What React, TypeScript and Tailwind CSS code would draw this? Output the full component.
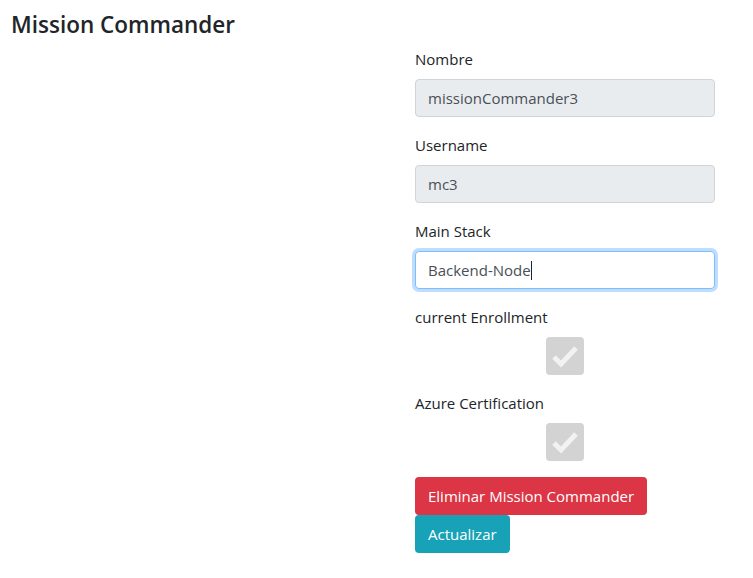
import React from "react";

const Field = ({ label, value, focused }: { label: string; value: string; focused?: boolean }) => (
  <div className="mb-4">
    <label className="block mb-2 leading-6 text-[15px] text-[#212529]">{label}</label>
    {focused ? (
      <div className="h-[38px] flex items-center px-3 rounded border border-[#80bdff] bg-white shadow-[0_0_0_3px_rgba(0,123,255,0.25)] text-[15px] text-[#495057]">
        {value}
        <span className="inline-block w-px h-[19px] bg-[#212529]" />
      </div>
    ) : (
      <input
        readOnly
        value={value}
        className="w-full h-[38px] px-3 rounded border border-[#ced4da] bg-[#e9ecef] text-[15px] text-[#495057] outline-none"
      />
    )}
  </div>
);

const Check = ({ label }: { label: string }) => (
  <div className="mb-4">
    <label className="block mb-2 leading-6 text-[15px] text-[#212529]">{label}</label>
    <div className="flex justify-center">
      <div className="w-[38px] h-[38px] rounded-sm bg-[#d3d3d3] flex items-center justify-center">
        <svg width="28" height="24" viewBox="0 0 28 24">
          <path d="M3 13 L10 20 L25 4" fill="none" stroke="#f2f2f2" strokeWidth="5" strokeLinejoin="miter" />
        </svg>
      </div>
    </div>
  </div>
);

export default function App() {
  return (
    <div className="bg-white min-h-[578px] pt-[10px] pl-[11px] font-['Open_Sans','Noto_Sans',sans-serif]">
      <h4 className="text-[22.5px] font-semibold leading-[29px] text-[#212529] mb-2">Mission Commander</h4>
      <div className="ml-[404px] w-[300px]">
        <Field label="Nombre" value="missionCommander3" />
        <Field label="Username" value="mc3" />
        <Field label="Main Stack" value="Backend-Node" focused />
        <Check label="current Enrollment" />
        <Check label="Azure Certification" />
        <div className="flex flex-col items-start">
          <button className="h-[38px] px-[13px] rounded bg-[#dc3545] text-white text-[15px]">Eliminar Mission Commander</button>
          <button className="h-[38px] px-[13px] rounded bg-[#17a2b8] text-white text-[15px]">Actualizar</button>
        </div>
      </div>
    </div>
  );
}
